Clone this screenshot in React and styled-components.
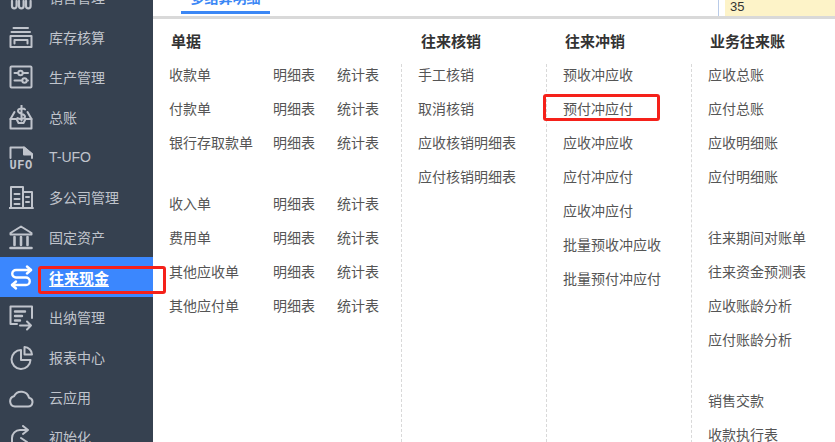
import React from "react";
import styled, { createGlobalStyle } from "styled-components";

const GlobalStyle = createGlobalStyle`
  html, body {
    margin: 0;
    padding: 0;
    background: #fff;
    font-family: "Liberation Sans", "Noto Sans CJK SC", sans-serif;
  }
`;

const Page = styled.div`
  display: flex;
  width: 835px;
  height: 442px;
  overflow: hidden;
`;

const Sidebar = styled.div`
  position: relative;
  z-index: 1;
  flex: 0 0 153px;
  height: 442px;
  background: #364150;
`;

const MenuList = styled.div`
  display: flex;
  flex-direction: column;
  margin-top: -23px;
`;

const MenuItem = styled.div`
  position: relative;
  display: flex;
  flex: 0 0 40px;
  align-items: center;
  height: 40px;
  padding-left: 9px;
  gap: 14px;
  font-size: ${(p) => (p.$active ? 15 : 14)}px;
  color: ${(p) => (p.$active ? "#fff" : "#c0c4cc")};
  font-weight: ${(p) => (p.$active ? 700 : 400)};
  background: ${(p) => (p.$active ? "#3b87fe" : "transparent")};
  svg {
    flex: 0 0 26px;
    margin-top: 2px;
  }
`;

const MenuLabel = styled.span`
  text-decoration: ${(p) => (p.$active ? "underline" : "none")};
  text-underline-offset: 2px;
`;

const RedBox = styled.div`
  position: absolute;
  box-sizing: border-box;
  border: 3px solid #f5211a;
  border-radius: 3px;
  left: ${(p) => p.$left}px;
  top: ${(p) => p.$top}px;
  width: ${(p) => p.$width}px;
  height: ${(p) => p.$height}px;
`;

const Main = styled.div`
  flex: 1;
  display: flex;
  flex-direction: column;
  min-width: 0;
`;

const TopBar = styled.div`
  display: flex;
  flex: 0 0 16px;
  height: 16px;
  overflow: hidden;
`;

const Tab = styled.div`
  display: flex;
  align-items: flex-end;
  justify-content: center;
  width: 89px;
  height: 11px;
  margin-left: 28px;
  font-size: 14px;
  font-weight: 700;
  color: #3b87f5;
  border-bottom: 3px solid #3b87f5;
  overflow: hidden;
`;

const TabLabel = styled.span`
  line-height: 16px;
  margin-bottom: 5px;
  white-space: nowrap;
`;

const TopCell = styled.div`
  display: flex;
  align-items: center;
  margin-left: auto;
  width: 110px;
  border-left: 1px solid #b9cbe8;
  padding-left: 6px;
`;

const YellowCell = styled.div`
  flex: 1;
  height: 16px;
  padding-left: 5px;
  background: #fdf3c8;
  color: #333;
  font-size: 13px;
  line-height: 13px;
`;

const Divider = styled.div`
  flex: 0 0 3px;
  background: #d9d9d9;
`;

const Columns = styled.div`
  flex: 1;
  display: flex;
  min-height: 0;
`;

const Column = styled.div`
  display: flex;
  flex-direction: column;
  flex: 0 0 ${(p) => p.$width}px;
`;

const ColumnTitle = styled.div`
  flex: 0 0 45px;
  padding: 14px 0 0 ${(p) => p.$inset}px;
  box-sizing: border-box;
  font-size: 15px;
  line-height: 18px;
  font-weight: 700;
  color: #333;
`;

const List = styled.div`
  flex: 1;
  padding-left: 16px;
  border-left: ${(p) => (p.$plain ? "none" : "1px dashed #d9d9d9")};
`;

const Row = styled.div`
  display: grid;
  grid-template-columns: 104px 64px 1fr;
  height: 22px;
  margin-bottom: ${(p) => (p.$gap ? 39 : 12)}px;
  font-size: 14px;
  line-height: 22px;
  color: #555;
  white-space: nowrap;
`;

const Plain = styled.div`
  position: relative;
  height: 22px;
  margin-bottom: ${(p) => (p.$gap ? 39 : 12)}px;
  font-size: 14px;
  line-height: 22px;
  color: #555;
  white-space: nowrap;
`;

const Icon = ({ children }) => (
  <svg
    width={26}
    height={26}
    viewBox="0 0 26 26"
    fill="none"
    stroke="currentColor"
    strokeWidth="2"
    strokeLinecap="round"
    strokeLinejoin="round"
  >
    {children}
  </svg>
);

const icons = {
  sales: (
    <path d="M3 16v5a2.3 2.3 0 0 0 4.6 0v-5M10 16v5a2.3 2.3 0 0 0 4.6 0v-5M17 16v5a2.3 2.3 0 0 0 4.6 0v-5" strokeWidth="2.2" />
  ),
  stock: (
    <>
      <path d="M4.5 3h14.5M2.5 7h18.5" />
      <rect x="1.5" y="11" width="21" height="11" />
      <path d="M5.5 18.5v-3.5h13v3.5" />
    </>
  ),
  produce: (
    <>
      <rect x="1.5" y="1.5" width="21" height="21" rx="1" />
      <path d="M5.5 8h3.5M14 8h5M5.5 15.5h7.5M18 15.5h1" />
      <circle cx="11.5" cy="8" r="2.2" />
      <circle cx="15.5" cy="15.5" r="2.2" />
    </>
  ),
  ledger: (
    <>
      <path d="M5.5 7 1.5 14v9.5h21V14l-4-7" />
      <path d="M1.5 14h6l2 4h5l2-4h6" />
      <path d="M16 4.5C15 3 9 3 9 6c0 3 7 2.5 7 5.5 0 3-6 3-7.5 1.5M12.5 0.5v15" />
    </>
  ),
  ufo: (
    <>
      <path d="M1.5 13V2.5H15L23 9v4" />
      <path d="M15 2.5 23 9.5H15Z" fill="currentColor" />
      <text x="0.5" y="23.5" fontSize="12" fontWeight="700" fill="currentColor" stroke="none" fontFamily="Liberation Mono, monospace" letterSpacing="0.6">UFO</text>
    </>
  ),
  company: (
    <>
      <path d="M0.5 23h23.5M2 23V2h12v21M14 7h9v16" />
      <path d="M5.5 9h5M5.5 14h5M5.5 19h5M17 12h3M17 17h3" />
    </>
  ),
  bank: (
    <>
      <path d="M12 1.5 1.5 8v1.5h21V8z" />
      <path d="M5.5 12v8M12 12v8M18.5 12v8" strokeWidth="2.6" />
      <path d="M1.5 23h21" strokeWidth="2.6" />
    </>
  ),
  swap: (
    <>
      <path d="M18 1.5 22 5l-4 3.5" strokeWidth="2.4" />
      <path d="M22 5H7a3.75 3.75 0 0 0 0 7.5h10a3.75 3.75 0 0 1 0 7.5H3" strokeWidth="2.4" />
      <path d="M7 16.5 3 20l4 3.5" strokeWidth="2.4" />
    </>
  ),
  cash: (
    <>
      <path d="M23 13V1.5H1.5V19H8" />
      <path d="M6 6.5h10M6 11h7M6 15.5h5" strokeWidth="2.4" />
      <path d="M11 20.5h11M18 16.5l4 4-4 4" />
    </>
  ),
  report: (
    <>
      <path d="M12 5A9.5 9.5 0 1 0 21.5 15H12Z" />
      <path d="M15.5 2v7.5H23A8 8 0 0 0 15.5 2Z" />
    </>
  ),
  cloud: (
    <path d="M6 21.5h13a4.4 4.4 0 0 0 1-8.7A8 8 0 0 0 5 11.3a5.2 5.2 0 0 0 1 10.2Z" />
  ),
  init: (
    <>
      <path d="M18 5H11a8 8 0 0 0-8 8v12" />
      <path d="M14 1l5 4-5 4" />
      <path d="M12 13l6 4" />
    </>
  ),
};

const menu = [
  { key: "sales", label: "销售管理" },
  { key: "stock", label: "库存核算" },
  { key: "produce", label: "生产管理" },
  { key: "ledger", label: "总账" },
  { key: "ufo", label: "T-UFO" },
  { key: "company", label: "多公司管理" },
  { key: "bank", label: "固定资产" },
  { key: "swap", label: "往来现金", active: true },
  { key: "cash", label: "出纳管理" },
  { key: "report", label: "报表中心" },
  { key: "cloud", label: "云应用" },
  { key: "init", label: "初始化" },
];

const docs = [
  ["收款单"],
  ["付款单"],
  ["银行存取款单", true],
  ["收入单"],
  ["费用单"],
  ["其他应收单"],
  ["其他应付单"],
];

const writeOff = ["手工核销", "取消核销", "应收核销明细表", "应付核销明细表"];

const offset = ["预收冲应收", "预付冲应付", "应收冲应收", "应付冲应付", "应收冲应付", "批量预收冲应收", "批量预付冲应付"];

const accounts = [
  ["应收总账"],
  ["应付总账"],
  ["应收明细账"],
  ["应付明细账", true],
  ["往来期间对账单"],
  ["往来资金预测表"],
  ["应收账龄分析"],
  ["应付账龄分析", true],
  ["销售交款"],
  ["收款执行表"],
];

export default function App() {
  return (
    <>
      <GlobalStyle />
      <Page>
        <Sidebar>
          <MenuList>
            {menu.map((m) => (
              <MenuItem key={m.key} $active={m.active}>
                <Icon>{icons[m.key]}</Icon>
                <MenuLabel $active={m.active}>{m.label}</MenuLabel>
                {m.active && <RedBox $left={38} $top={9} $width={128} $height={28} />}
              </MenuItem>
            ))}
          </MenuList>
        </Sidebar>
        <Main>
          <TopBar>
            <Tab>
              <TabLabel>多结算明细</TabLabel>
            </Tab>
            <TopCell>
              <YellowCell>35</YellowCell>
            </TopCell>
          </TopBar>
          <Divider />
          <Columns>
            <Column $width={248}>
              <ColumnTitle $inset={18}>单据</ColumnTitle>
              <List $plain>
                {docs.map(([name, gap]) => (
                  <Row key={name} $gap={gap}>
                    <span>{name}</span>
                    <span>明细表</span>
                    <span>统计表</span>
                  </Row>
                ))}
              </List>
            </Column>
            <Column $width={145}>
              <ColumnTitle $inset={20}>往来核销</ColumnTitle>
              <List>
                {writeOff.map((name) => (
                  <Plain key={name}>{name}</Plain>
                ))}
              </List>
            </Column>
            <Column $width={145}>
              <ColumnTitle $inset={19}>往来冲销</ColumnTitle>
              <List>
                {offset.map((name, i) => (
                  <Plain key={name}>
                    {name}
                    {i === 1 && <RedBox $left={-20} $top={-4} $width={117} $height={27} />}
                  </Plain>
                ))}
              </List>
            </Column>
            <Column $width={144}>
              <ColumnTitle $inset={19}>业务往来账</ColumnTitle>
              <List>
                {accounts.map(([name, gap]) => (
                  <Plain key={name} $gap={gap}>
                    {name}
                  </Plain>
                ))}
              </List>
            </Column>
          </Columns>
        </Main>
      </Page>
    </>
  );
}
